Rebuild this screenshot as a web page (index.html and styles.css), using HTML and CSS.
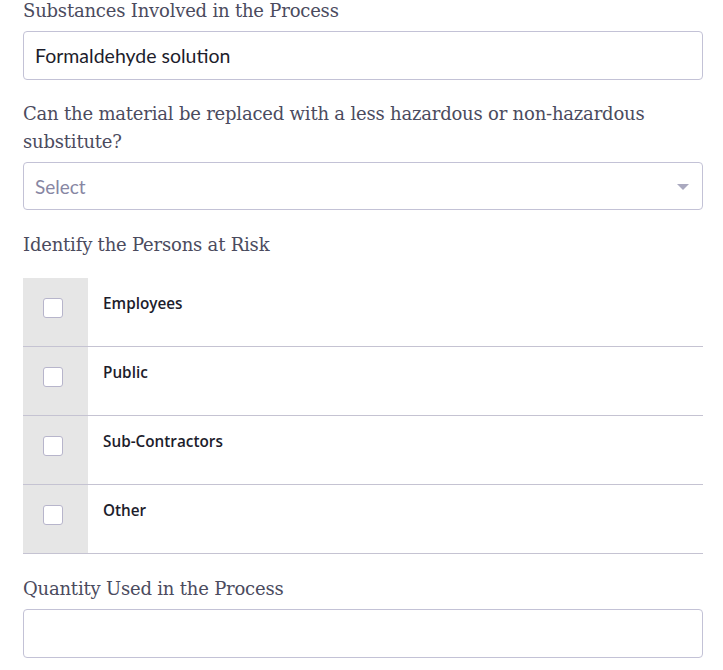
FILE: index.html
```html
<!DOCTYPE html>
<html>
<head>
<meta charset="utf-8">
<link rel="stylesheet" href="styles.css">
</head>
<body>
<div class="form">
  <div class="field">
    <label class="label">Substances Involved in the Process</label>
    <div class="input">Formaldehyde solution</div>
  </div>
  <div class="field">
    <label class="label">Can the material be replaced with a less hazardous or non-hazardous substitute?</label>
    <div class="input select"><span class="placeholder">Select</span><span class="arrow"></span></div>
  </div>
  <div class="field">
    <label class="label">Identify the Persons at Risk</label>
    <div class="checklist">
      <div class="row"><div class="box-cell"><span class="box"></span></div><div class="text">Employees</div></div>
      <div class="row"><div class="box-cell"><span class="box"></span></div><div class="text">Public</div></div>
      <div class="row"><div class="box-cell"><span class="box"></span></div><div class="text">Sub-Contractors</div></div>
      <div class="row"><div class="box-cell"><span class="box"></span></div><div class="text">Other</div></div>
    </div>
  </div>
  <div class="field">
    <label class="label">Quantity Used in the Process</label>
    <div class="input"></div>
  </div>
</div>
</body>
</html>
```
FILE: styles.css
```css
* { box-sizing: border-box; }
html, body { margin: 0; padding: 0; background: #fff; }
body { padding: 0 21px 0 23px; }
.form { display: flex; flex-direction: column; width: 680px; }
.field { display: flex; flex-direction: column; }
.label {
  font-family: "DejaVu Serif", "Liberation Serif", serif;
  font-size: 18px;
  line-height: 28px;
  color: #4b4b5e;
  letter-spacing: -0.2px;
  margin-top: -3px;
}
.input {
  height: 49px;
  border: 1px solid #c3c2d6;
  border-radius: 4px;
  padding: 0 11px;
  display: flex;
  align-items: center;
  font-family: Lato, "Open Sans", sans-serif;
  font-size: 19.5px;
  color: #1d1d2c;
  margin-top: 6px;
  margin-bottom: 23px;
}
.select { justify-content: space-between; height: 48px; margin-bottom: 24px; font-size: 19px; }
.placeholder { color: #8786a3; }
.arrow {
  width: 0; height: 0;
  border-left: 6px solid transparent;
  border-right: 6px solid transparent;
  border-top: 6px solid #aaa9bf;
  margin-right: 2px;
  margin-top: 2px;
}
.checklist { margin-top: 19px; margin-bottom: 24px; }
.row {
  display: flex;
  height: 69px;
  border-bottom: 1px solid #c5c3d2;
}
.box-cell {
  width: 65px;
  background: #e6e6e6;
  padding: 20px 0 0 20px;
}
.box {
  display: block;
  width: 20px; height: 20px;
  background: #fff;
  border: 1px solid #b7b5cb;
  border-radius: 3px;
}
.text {
  padding: 15px 0 0 15px;
  font-family: "Open Sans", sans-serif;
  font-weight: 600;
  font-size: 15.3px;
  color: #1d1d2c;
}
```
